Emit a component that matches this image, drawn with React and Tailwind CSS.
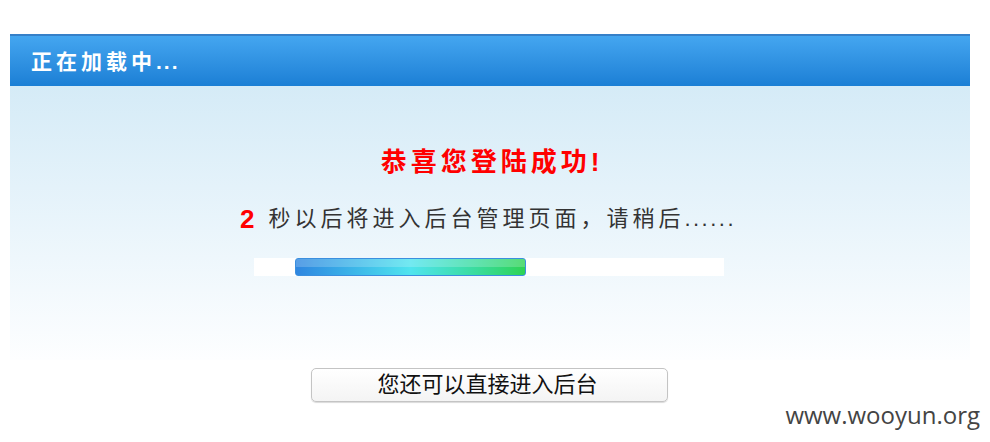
export default function App() {
  const cjk = { fontFamily: '"Liberation Sans", "Noto Sans CJK SC", sans-serif' };
  return (
    <div className="w-[990px] h-[442px] bg-white relative overflow-hidden" style={cjk}>
      <div className="pt-[34px] px-[10px]">
        <div className="w-[960px]">
          <div className="h-[52px] border-t-2 border-[#3680c8] bg-gradient-to-b from-[#44a6f0] to-[#1b7fd5] flex items-center pl-[21px]">
            <span className="text-white text-[21px] font-bold tracking-[4px] leading-none">正在加载中</span>
            <span className="text-white text-[21px] font-bold tracking-[2px] leading-none">...</span>
          </div>
          <div className="h-[274px] bg-gradient-to-b from-[#d5ebf7] to-[#fdfeff] flex flex-col items-center">
            <div className="mt-[60px] h-[32px] flex items-center text-[#ff0000] text-[26px] font-bold tracking-[4px] leading-none pl-[4px]">
              恭喜您登陆成功!
            </div>
            <div className="mt-[26px] h-[30px] flex items-center leading-none pr-[4px]">
              <span className="text-[#ff0000] text-[26px] font-bold mr-[14px]">2</span>
              <span className="text-[#333333] text-[22px] tracking-[4px]">秒以后将进入后台管理页面，请稍后</span>
              <span className="text-[#333333] text-[22px] tracking-[2.5px]">......</span>
            </div>
            <div className="mt-[24px] ml-[-2px] w-[470px] h-[18px] bg-white relative">
              <div className="absolute left-[41px] top-0 w-[231px] h-[18px] rounded-[3px] border border-[#3b8fdf] overflow-hidden bg-gradient-to-r from-[#2f86e0] via-[#50e4ee] to-[#2fd352]">
                <div className="h-[8px] bg-white/20"></div>
              </div>
            </div>
          </div>
        </div>
      </div>
      <div className="flex justify-center mt-[8px]">
        <button className="ml-[-11px] w-[357px] h-[34px] rounded-[5px] border border-[#c4c4c4] bg-gradient-to-b from-white to-[#f4f4f4] shadow-[0_1px_1px_rgba(0,0,0,0.15)] text-[22px] text-[#111] leading-none pr-[4px]" style={cjk}>
          您还可以直接进入后台
        </button>
      </div>
      <div className="absolute right-[10px] bottom-[15px] text-[#444] text-[24px] leading-none" style={{ fontFamily: '"Open Sans", sans-serif' }}>
        www.wooyun.org
      </div>
    </div>
  );
}
